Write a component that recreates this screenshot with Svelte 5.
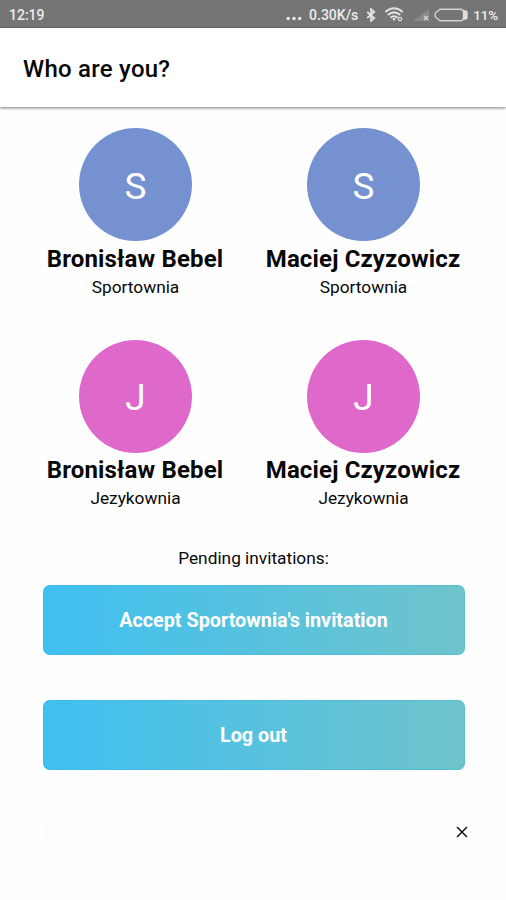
<script>
  const profiles = [
    { name: 'Bronisław Bebel', club: 'Sportownia', kind: 'sport' },
    { name: 'Maciej Czyzowicz', club: 'Sportownia', kind: 'sport' },
    { name: 'Bronisław Bebel', club: 'Jezykownia', kind: 'language' },
    { name: 'Maciej Czyzowicz', club: 'Jezykownia', kind: 'language' }
  ];
</script>

<div class="screen">
  <div class="status">
    <span class="clock">12:19</span>
    <div class="indicators">
      <svg class="dots" width="16" height="5" viewBox="0 0 16 5" fill="#eee"><circle cx="2.2" cy="2.5" r="1.7"/><circle cx="8" cy="2.5" r="1.7"/><circle cx="13.7" cy="2.5" r="1.7"/></svg>
      <span class="speed">0.30K/s</span>
      <svg class="bluetooth" width="10" height="14" viewBox="0 0 10 14" fill="none" stroke="#e5e5e5" stroke-width="1.7"><path d="M1.2 4 8.3 10 5 13V1l3.3 3-7.1 6"/></svg>
      <svg class="wifi" width="20" height="15" viewBox="0 0 20 15" fill="none" stroke="#e2e2e2" stroke-width="2"><path d="M1.3 5Q10-2.4 18.7 5M3.8 8Q10 2.7 16.2 8M6.4 10.8Q10 7.7 13.6 10.8"/><path d="m8.3 12 1.7 2 2-2.4Q10 10 8.3 12Z" fill="#e2e2e2" stroke="none"/><circle cx="16" cy="12" r="1.7" stroke-width="1.2"/></svg>
      <svg class="signal" width="18" height="14" viewBox="0 0 18 14"><path d="M1 13 17 1v12Z" fill="#8a8a8a"/><path d="m12 8 4 4m0-4-4 4" stroke="#d5d5d5" stroke-width="1.3"/></svg>
      <svg class="battery" width="35" height="14" viewBox="0 0 35 14" fill="none" stroke="#d2d2d2" stroke-width="1.4"><path d="M6 1.2h20.5q3 0 3 3v5.6q0 3-3 3H6L1.2 8.7V5.3Z"/><path d="M29 2.3h2.2q2.5 0 2.5 2.5v4.4q0 2.5-2.5 2.5H29Z" fill="#dedede" stroke="none"/></svg>
      <span class="percent">11%</span>
    </div>
  </div>
  <header><h1>Who are you?</h1></header>
  <main>
    <div class="profiles">
      {#each profiles as profile}
        <div class="profile">
          <div class="avatar {profile.kind}">{profile.club[0]}</div>
          <strong>{profile.name}</strong>
          <span class="club">{profile.club}</span>
        </div>
      {/each}
    </div>
    <p>Pending invitations:</p>
    <button>Accept Sportownia's invitation</button>
    <button class="logout">Log out</button>
  </main>
  <footer>
    <span class="mark"></span>
    <svg width="12" height="12" viewBox="0 0 12 12" stroke="#111" stroke-width="1.5"><path d="m1 1 10 10M11 1 1 11"/></svg>
  </footer>
</div>

<style>
  .screen { width: 506px; height: 900px; overflow: hidden; background: #fefefe; color: #080808; font-family: Roboto, sans-serif; display: flex; flex-direction: column; }
  .status { height: 28px; flex: none; box-sizing: border-box; border-bottom: 1px solid #606060; background: #757575; color: #ededed; display: flex; align-items: center; justify-content: space-between; padding: 2px 8px 0 9px; font-size: 14px; line-height: 20px; font-weight: 500; }
  .indicators { display: flex; align-items: center; }
  .dots { margin: 8px 7px 0 0; }
  .bluetooth { margin-left: 8px; }
  .wifi { margin-left: 8px; }
  .signal { margin-left: 8px; }
  .battery { margin-left: 4px; }
  .percent { margin-left: 4px; font-size: 13.5px; letter-spacing: -.2px; }
  header { height: 79px; flex: none; display: flex; align-items: center; padding: 0 23px; background: #fff; box-shadow: 0 1px 3px #777; }
  h1 { margin: 3px 0 0; font-size: 24px; line-height: 30px; font-weight: 500; letter-spacing: .25px; }
  main { padding: 21px 21px 0; display: flex; flex-direction: column; align-items: center; }
  .profiles { width: 456px; margin-right: 8px; display: grid; grid-template-columns: repeat(2, 228px); grid-auto-rows: 211.5px; }
  .profile { display: flex; flex-direction: column; align-items: center; }
  .avatar { width: 113px; height: 113px; flex: none; box-sizing: border-box; padding: 4px 0 0 1px; border-radius: 50%; display: grid; place-items: center; color: #fff; font-size: 37px; line-height: 44px; }
  .sport { background: #7691d0; }
  .language { background: #df69cb; }
  strong { font-size: 24px; line-height: 30px; margin-top: 2.5px; white-space: nowrap; font-weight: 700; letter-spacing: .15px; }
  .club { font-size: 17.3px; line-height: 22px; margin-top: 2px; padding-left: 1px; }
  p { font-size: 17.3px; line-height: 22px; margin: -4px 0 16px; padding-left: 1px; }
  button { width: 422px; height: 70px; margin-left: 1px; border: 1px solid #35b5df60; border-radius: 7px; background: linear-gradient(90deg, #3fc0f1, #6fc4cb); background-origin: border-box; color: #fff; padding: 2px 0 0; font: 700 19.8px/26px Roboto, sans-serif; }
  .logout { margin-top: 45px; }
  footer { height: 14px; margin-top: 55px; padding: 0 38px 0 44px; display: flex; align-items: center; justify-content: space-between; }
  .mark { width: 5px; height: 12px; background: #f9f9f9; border-radius: 0 4px 4px 0; }
</style>
